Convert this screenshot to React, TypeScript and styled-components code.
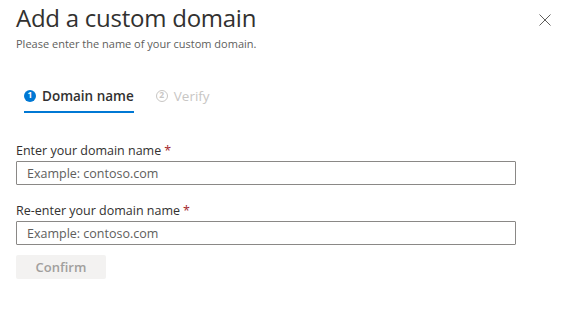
import React from "react";
import styled, { createGlobalStyle } from "styled-components";

const Global = createGlobalStyle`
  html, body { margin: 0; padding: 0; background: #ffffff; }
  body { font-family: "Open Sans", "Noto Sans", sans-serif; color: #323130; }
  * { box-sizing: border-box; }
`;

const Panel = styled.div`
  width: 581px;
  height: 321px;
  padding: 0 16px;
  display: flex;
  flex-direction: column;
  background: #fff;
`;

const Header = styled.div`
  display: flex;
  justify-content: space-between;
  align-items: flex-start;
  padding-right: 14px;
`;

const TitleBlock = styled.div`
  display: flex;
  flex-direction: column;
`;

const Title = styled.h1`
  margin: 2px 0 0 0;
  font-size: 24px;
  font-weight: 400;
  line-height: 32px;
  color: #323130;
  letter-spacing: -0.25px;
`;

const Subtitle = styled.p`
  margin: 2px 0 0 0;
  font-size: 11px;
  line-height: 16px;
  color: #605e5c;
`;

const CloseButton = styled.button`
  margin-top: 14px;
  width: 12px;
  height: 12px;
  padding: 0;
  border: none;
  background: transparent;
  display: flex;
  cursor: pointer;
`;

const Tabs = styled.div`
  display: flex;
  gap: 22px;
  margin: 30px 0 0 8px;
`;

const Tab = styled.div<{ $active?: boolean }>`
  display: flex;
  align-items: center;
  gap: 6px;
  height: 31px;
  padding-bottom: 2px;
  border-bottom: 2px solid ${(p) => (p.$active ? "#0078d4" : "transparent")};
  font-size: 13.5px;
  font-weight: ${(p) => (p.$active ? 600 : 400)};
  color: ${(p) => (p.$active ? "#323130" : "#c8c6c4")};
`;

const StepBadge = styled.span<{ $active?: boolean }>`
  width: 12px;
  height: 12px;
  border-radius: 50%;
  display: inline-flex;
  align-items: center;
  justify-content: center;
  font-size: 8.5px;
  font-weight: 700;
  line-height: 1;
  background: ${(p) => (p.$active ? "#0078d4" : "transparent")};
  color: ${(p) => (p.$active ? "#fff" : "#c8c6c4")};
  border: ${(p) => (p.$active ? "none" : "1px solid #c8c6c4")};
`;

const Form = styled.div`
  display: flex;
  flex-direction: column;
  margin-top: 28px;
  width: 500px;
`;

const Field = styled.div`
  display: flex;
  flex-direction: column;
  margin-bottom: 16px;
  &:last-of-type { margin-bottom: 10px; }
`;

const Label = styled.label`
  font-size: 12.5px;
  line-height: 20px;
  color: #323130;
`;

const Required = styled.span`
  color: #a4262c;
  margin-left: 3px;
`;

const Input = styled.input`
  width: 500px;
  height: 24px;
  border: 1px solid #8a8886;
  border-radius: 1px;
  padding: 0 10px;
  font-family: inherit;
  font-size: 12.5px;
  color: #323130;
  outline: none;
  &::placeholder { color: #605e5c; }
`;

const ConfirmButton = styled.button`
  width: 90px;
  height: 24px;
  border: none;
  border-radius: 2px;
  background: #f3f2f1;
  color: #a19f9d;
  font-family: inherit;
  font-size: 13px;
  font-weight: 600;
  padding: 0;
`;

export default function App() {
  return (
    <>
      <Global />
      <Panel>
        <Header>
          <TitleBlock>
            <Title>Add a custom domain</Title>
            <Subtitle>Please enter the name of your custom domain.</Subtitle>
          </TitleBlock>
          <CloseButton aria-label="Close">
            <svg width="12" height="12" viewBox="0 0 12 12">
              <path d="M0.5 0.5 L11.5 11.5 M11.5 0.5 L0.5 11.5" stroke="#605e5c" strokeWidth="1" fill="none" />
            </svg>
          </CloseButton>
        </Header>
        <Tabs>
          <Tab $active>
            <StepBadge $active>1</StepBadge>
            Domain name
          </Tab>
          <Tab>
            <StepBadge>2</StepBadge>
            Verify
          </Tab>
        </Tabs>
        <Form>
          <Field>
            <Label>
              Enter your domain name<Required>*</Required>
            </Label>
            <Input placeholder="Example: contoso.com" />
          </Field>
          <Field>
            <Label>
              Re-enter your domain name<Required>*</Required>
            </Label>
            <Input placeholder="Example: contoso.com" />
          </Field>
          <ConfirmButton disabled>Confirm</ConfirmButton>
        </Form>
      </Panel>
    </>
  );
}
